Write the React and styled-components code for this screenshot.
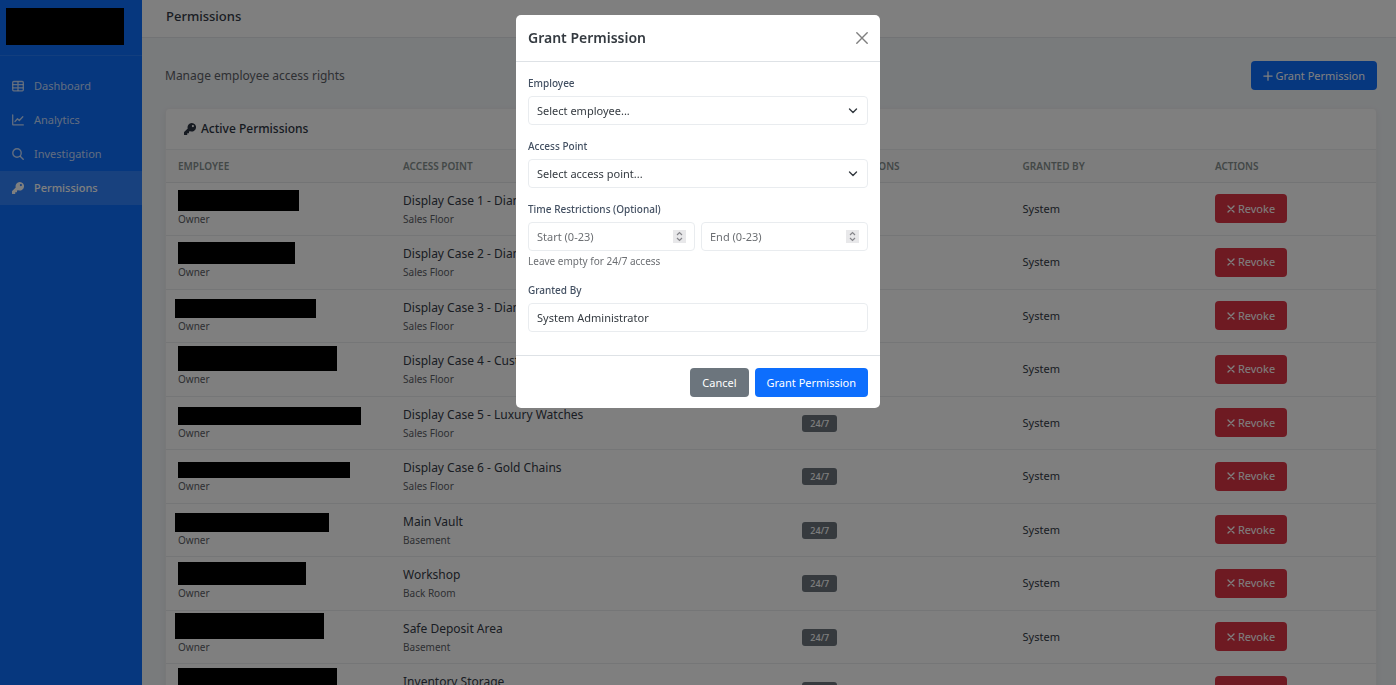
import React from "react";
import styled, { createGlobalStyle } from "styled-components";

const Global = createGlobalStyle`
  * { box-sizing: border-box; }
  body {
    margin: 0;
    font-family: "Noto Sans", sans-serif;
    font-size: 12px;
    line-height: 18px;
    color: #212529;
    background: #f3f6f9;
    height: 100vh;
    overflow: hidden;
  }
  button, input, select { font: inherit; }
`;

const Shell = styled.div`
  display: flex;
  align-items: stretch;
  min-height: 100vh;
`;

const Sidebar = styled.aside`
  flex: 0 0 142px;
  background: #0d6efd;
`;

const Brand = styled.div`
  height: 56px;
  padding: 8px 18px 0 6px;
  border-bottom: 1px solid rgba(255, 255, 255, 0.1);
`;

const Nav = styled.nav`
  display: flex;
  flex-direction: column;
  padding-top: 13px;
`;

const NavLink = styled.a`
  display: flex;
  align-items: center;
  gap: 10px;
  height: 34px;
  padding: 0 12px;
  text-decoration: none;
  font-size: 11px;
  font-weight: ${(p) => (p.$active ? 500 : 400)};
  color: ${(p) => (p.$active ? "#fff" : "rgba(255,255,255,0.75)")};
  background: ${(p) => (p.$active ? "rgba(255,255,255,0.15)" : "transparent")};
`;

const Main = styled.div`
  flex: 1;
  min-width: 0;
`;

const TopBar = styled.header`
  height: 38px;
  padding: 4px 24px;
  background: #fff;
  border-bottom: 1px solid #e4e7ea;
`;

const PageTitle = styled.h1`
  margin: 0;
  font-size: 13px;
  line-height: 24px;
  font-weight: 500;
  color: #343a46;
`;

const Content = styled.main`
  padding: 23px 19px 0 23px;
`;

const Intro = styled.div`
  display: flex;
  align-items: center;
  justify-content: space-between;
  margin-bottom: 18px;
  color: #5c6066;
`;

const Button = styled.button`
  display: inline-flex;
  align-items: center;
  justify-content: center;
  gap: 3px;
  height: 29px;
  padding: 0 12px;
  border: 0;
  border-radius: 4px;
  font-size: 11px;
  color: #fff;
  background: ${(p) => ({ primary: "#0d6efd", danger: "#dc3545", secondary: "#6c757d" })[p.$tone]};
`;

const Card = styled.section`
  background: #fff;
  border: 1px solid #f0f1f3;
  border-radius: 4px;
  box-shadow: 0 2px 6px rgba(0, 0, 0, 0.06);
`;

const CardTitle = styled.h2`
  display: flex;
  align-items: center;
  gap: 5px;
  height: 41px;
  margin: 0;
  padding: 0 18px;
  border-bottom: 1px solid #eceef0;
  font-size: 12px;
  font-weight: 500;
  color: #2c3442;
`;

const Table = styled.table`
  width: 100%;
  table-layout: fixed;
  border-collapse: collapse;
`;

const Col = styled.col`
  width: ${(p) => p.$share}%;
`;

const Th = styled.th`
  height: 32px;
  padding: 0 12px;
  border-bottom: 1px solid #e6e8ea;
  background: #fafafa;
  text-align: left;
  font-size: 10px;
  font-weight: 600;
  color: #86908f;
`;

const Row = styled.tr`
  height: 53px;
  &:nth-child(even) { height: 54px; }
`;

const Td = styled.td`
  padding: 0 12px;
  border-bottom: 1px solid #eaecee;
  font-size: 11px;
  vertical-align: middle;
  color: #343a46;
`;

const Primary = styled.div`
  height: 20px;
  font-size: 12px;
  line-height: 20px;
  white-space: nowrap;
`;

const Secondary = styled.div`
  font-size: 10px;
  line-height: 16px;
  color: #5c6066;
`;

const NameSlot = styled(Primary)`
  display: flex;
  align-items: flex-end;
`;

const Redaction = styled.div`
  width: ${(p) => p.$w}px;
  height: ${(p) => p.$h}px;
  margin-left: ${(p) => (p.$out ? -3 : 0)}px;
  background: #000;
`;

const BrandMark = styled.div`
  height: 37px;
  background: #000;
`;

const Badge = styled.span`
  display: inline-block;
  padding: 0 8px;
  border-radius: 3px;
  font-size: 9px;
  line-height: 17px;
  font-weight: 500;
  color: #fff;
  background: #6c757d;
`;

const Backdrop = styled.div`
  position: fixed;
  inset: 0;
  display: flex;
  align-items: flex-start;
  justify-content: center;
  padding: 15px;
  background: rgba(0, 0, 0, 0.5);
`;

const Dialog = styled.form`
  width: 364px;
  border-radius: 5px;
  overflow: hidden;
  background: #fff;
`;

const DialogHead = styled.div`
  display: flex;
  align-items: center;
  justify-content: space-between;
  height: 47px;
  padding: 0 12px;
  border-bottom: 1px solid #dee2e6;
`;

const DialogTitle = styled.h2`
  margin: 0;
  font-size: 14px;
  font-weight: 600;
  color: #343a40;
`;

const CloseButton = styled.button`
  display: flex;
  padding: 0;
  border: 0;
  background: none;
  color: #7f7f7f;
`;

const DialogBody = styled.div`
  display: flex;
  flex-direction: column;
  gap: 12px;
  padding: 12px 12px 23px;
`;

const Field = styled.div`
  display: flex;
  flex-direction: column;
`;

const labelStyle = `
  margin-bottom: 4px;
  font-size: 10px;
  line-height: 18px;
  font-weight: 500;
  color: #435062;
`;

const Label = styled.label`${labelStyle}`;
const GroupLabel = styled.div`${labelStyle}`;

const Input = styled.input`
  width: 100%;
  min-width: 0;
  height: 29px;
  padding: 0 8px;
  border: 1px solid #e9ecef;
  border-radius: 4px;
  font-size: 11px;
  color: #343a40;
  background: #fff;
  &::placeholder { color: #6c6f73; opacity: 1; }
`;

const SelectWrap = styled.div`
  position: relative;
  display: flex;
  & > svg {
    position: absolute;
    right: 10px;
    top: 9px;
    pointer-events: none;
  }
`;

const Select = styled(Input).attrs({ as: "select" })`
  appearance: none;
`;

const Hours = styled.div`
  display: grid;
  grid-template-columns: 1fr 1fr;
  gap: 6px;
`;

const NumberWrap = styled.div`
  position: relative;
  display: flex;
  input { appearance: textfield; }
  & > svg {
    position: absolute;
    right: 9px;
    top: 8px;
    pointer-events: none;
  }
`;

const Hint = styled.small`
  margin-top: 2px;
  font-size: 10px;
  line-height: 16px;
  color: #6c6f73;
`;

const DialogFoot = styled.div`
  display: flex;
  justify-content: flex-end;
  gap: 6px;
  padding: 12px 12px 11px;
  border-top: 1px solid #dee2e6;
`;

const KeyIcon = () => (
  <svg width="12" height="12" viewBox="0 0 24 24" fill="currentColor" aria-hidden="true">
    <path
      fillRule="evenodd"
      d="M15.500 0a8.500 8.500 0 0 0-8 11L.8 17.700A2 2 0 0 0 0 19v4a1 1 0 0 0 1 1h4.500a1 1 0 0 0 1-1v-2.500H9a1 1 0 0 0 1-1V17l2.500-.6A8.500 8.500 0 1 0 15.500 0zm2.300 4a2.200 2.200 0 1 1 0 4.400 2.200 2.200 0 0 1 0-4.400z"
    />
  </svg>
);

const Line = ({ size = 12, stroke = 1.4, d, children }) => (
  <svg
    width={size}
    height={size}
    viewBox="0 0 12 12"
    fill="none"
    stroke="currentColor"
    strokeWidth={stroke}
    strokeLinecap="round"
    strokeLinejoin="round"
    aria-hidden="true"
  >
    {children}
    <path d={d} />
  </svg>
);

const GridIcon = () => (
  <Line stroke={1.3} d="M1 4.700H11M1 7.800H11M6 2V10.500">
    <rect x="0.700" y="1.500" width="10.600" height="9.300" rx="1" />
  </Line>
);

const ChartIcon = () => <Line stroke={1.3} d="M.7 1V10.300a.6.6 0 0 0 .6.6H11.300M3 7.500 5.500 4.800 7.300 6.500 10.800 2.800" />;

const SearchIcon = () => (
  <Line stroke={1.4} d="M8.200 8.200 11.200 11.200">
    <circle cx="5" cy="5" r="4.200" />
  </Line>
);

const PlusIcon = () => <Line size={10} stroke={1.5} d="M6 1V11M1 6H11" />;
const TimesIcon = () => <Line size={8} stroke={2} d="M1.500 1.500 10.500 10.500M10.500 1.500 1.500 10.500" />;
const CloseIcon = () => <Line d="M.8.8 11.200 11.200M11.200.8.8 11.200" />;

const Chevron = () => (
  <svg width="10" height="11" viewBox="0 0 10 11" fill="none" stroke="#343a40" strokeWidth="1.400" aria-hidden="true">
    <path d="M1.500 4 5 7.500 8.500 4" strokeLinecap="round" strokeLinejoin="round" />
  </svg>
);

const Spinner = () => (
  <svg width="13" height="13" viewBox="0 0 13 13" aria-hidden="true">
    <rect width="13" height="13" fill="#e8e8ea" />
    <path d="M4 5 6.500 2.500 9 5M4 8 6.500 10.500 9 8" fill="none" stroke="#85858a" strokeWidth="1.200" />
  </svg>
);

const nav = [
  { label: "Dashboard", icon: <GridIcon /> },
  { label: "Analytics", icon: <ChartIcon /> },
  { label: "Investigation", icon: <SearchIcon /> },
  { label: "Permissions", icon: <KeyIcon />, active: true },
];

const rows = [
  { point: "Display Case 1 - Diamond Rings", zone: "Sales Floor", w: 121, h: 21 },
  { point: "Display Case 2 - Diamonds", zone: "Sales Floor", w: 117, h: 22 },
  { point: "Display Case 3 - Diamonds", zone: "Sales Floor", w: 141, h: 19, out: true },
  { point: "Display Case 4 - Custom", zone: "Sales Floor", w: 159, h: 25 },
  { point: "Display Case 5 - Luxury Watches", zone: "Sales Floor", w: 183, h: 18 },
  { point: "Display Case 6 - Gold Chains", zone: "Sales Floor", w: 172, h: 16 },
  { point: "Main Vault", zone: "Basement", w: 154, h: 19, out: true },
  { point: "Workshop", zone: "Back Room", w: 128, h: 23 },
  { point: "Safe Deposit Area", zone: "Basement", w: 149, h: 26, out: true },
  { point: "Inventory Storage", zone: "Back Room", w: 159, h: 24 },
];

export default function App() {
  return (
    <>
      <Global />
      <Shell>
        <Sidebar>
          <Brand>
            <BrandMark />
          </Brand>
          <Nav>
            {nav.map((n) => (
              <NavLink key={n.label} href="#" $active={n.active}>
                {n.icon}
                {n.label}
              </NavLink>
            ))}
          </Nav>
        </Sidebar>
        <Main>
          <TopBar>
            <PageTitle>Permissions</PageTitle>
          </TopBar>
          <Content>
            <Intro>
              <span>Manage employee access rights</span>
              <Button type="button" $tone="primary">
                <PlusIcon />
                Grant Permission
              </Button>
            </Intro>
            <Card>
              <CardTitle>
                <KeyIcon />
                Active Permissions
              </CardTitle>
              <Table>
                <colgroup>
                  <Col $share={18.6} />
                  <Col $share={33} />
                  <Col $share={18.2} />
                  <Col $share={15.9} />
                  <Col $share={14.3} />
                </colgroup>
                <thead>
                  <tr>
                    <Th>EMPLOYEE</Th>
                    <Th>ACCESS POINT</Th>
                    <Th>TIME RESTRICTIONS</Th>
                    <Th>GRANTED BY</Th>
                    <Th>ACTIONS</Th>
                  </tr>
                </thead>
                <tbody>
                  {rows.map((r) => (
                    <Row key={r.point}>
                      <Td>
                        <NameSlot>
                          <Redaction $w={r.w} $h={r.h} $out={r.out} />
                        </NameSlot>
                        <Secondary>Owner</Secondary>
                      </Td>
                      <Td>
                        <Primary>{r.point}</Primary>
                        <Secondary>{r.zone}</Secondary>
                      </Td>
                      <Td>
                        <Badge>24/7</Badge>
                      </Td>
                      <Td>System</Td>
                      <Td>
                        <Button type="button" $tone="danger">
                          <TimesIcon />
                          Revoke
                        </Button>
                      </Td>
                    </Row>
                  ))}
                </tbody>
              </Table>
            </Card>
          </Content>
        </Main>
      </Shell>
      <Backdrop>
        <Dialog role="dialog" aria-labelledby="dialog-title">
          <DialogHead>
            <DialogTitle id="dialog-title">Grant Permission</DialogTitle>
            <CloseButton type="button" aria-label="Close">
              <CloseIcon />
            </CloseButton>
          </DialogHead>
          <DialogBody>
            <Field>
              <Label htmlFor="employee">Employee</Label>
              <SelectWrap>
                <Select id="employee">
                  <option>Select employee...</option>
                </Select>
                <Chevron />
              </SelectWrap>
            </Field>
            <Field>
              <Label htmlFor="point">Access Point</Label>
              <SelectWrap>
                <Select id="point">
                  <option>Select access point...</option>
                </Select>
                <Chevron />
              </SelectWrap>
            </Field>
            <Field role="group" aria-labelledby="hours-label">
              <GroupLabel id="hours-label">Time Restrictions (Optional)</GroupLabel>
              <Hours>
                <NumberWrap>
                  <Input type="number" min="0" max="23" placeholder="Start (0-23)" aria-label="Start hour" />
                  <Spinner />
                </NumberWrap>
                <NumberWrap>
                  <Input type="number" min="0" max="23" placeholder="End (0-23)" aria-label="End hour" />
                  <Spinner />
                </NumberWrap>
              </Hours>
              <Hint>Leave empty for 24/7 access</Hint>
            </Field>
            <Field>
              <Label htmlFor="granted">Granted By</Label>
              <Input id="granted" defaultValue="System Administrator" />
            </Field>
          </DialogBody>
          <DialogFoot>
            <Button type="button" $tone="secondary">Cancel</Button>
            <Button type="submit" $tone="primary">Grant Permission</Button>
          </DialogFoot>
        </Dialog>
      </Backdrop>
    </>
  );
}
